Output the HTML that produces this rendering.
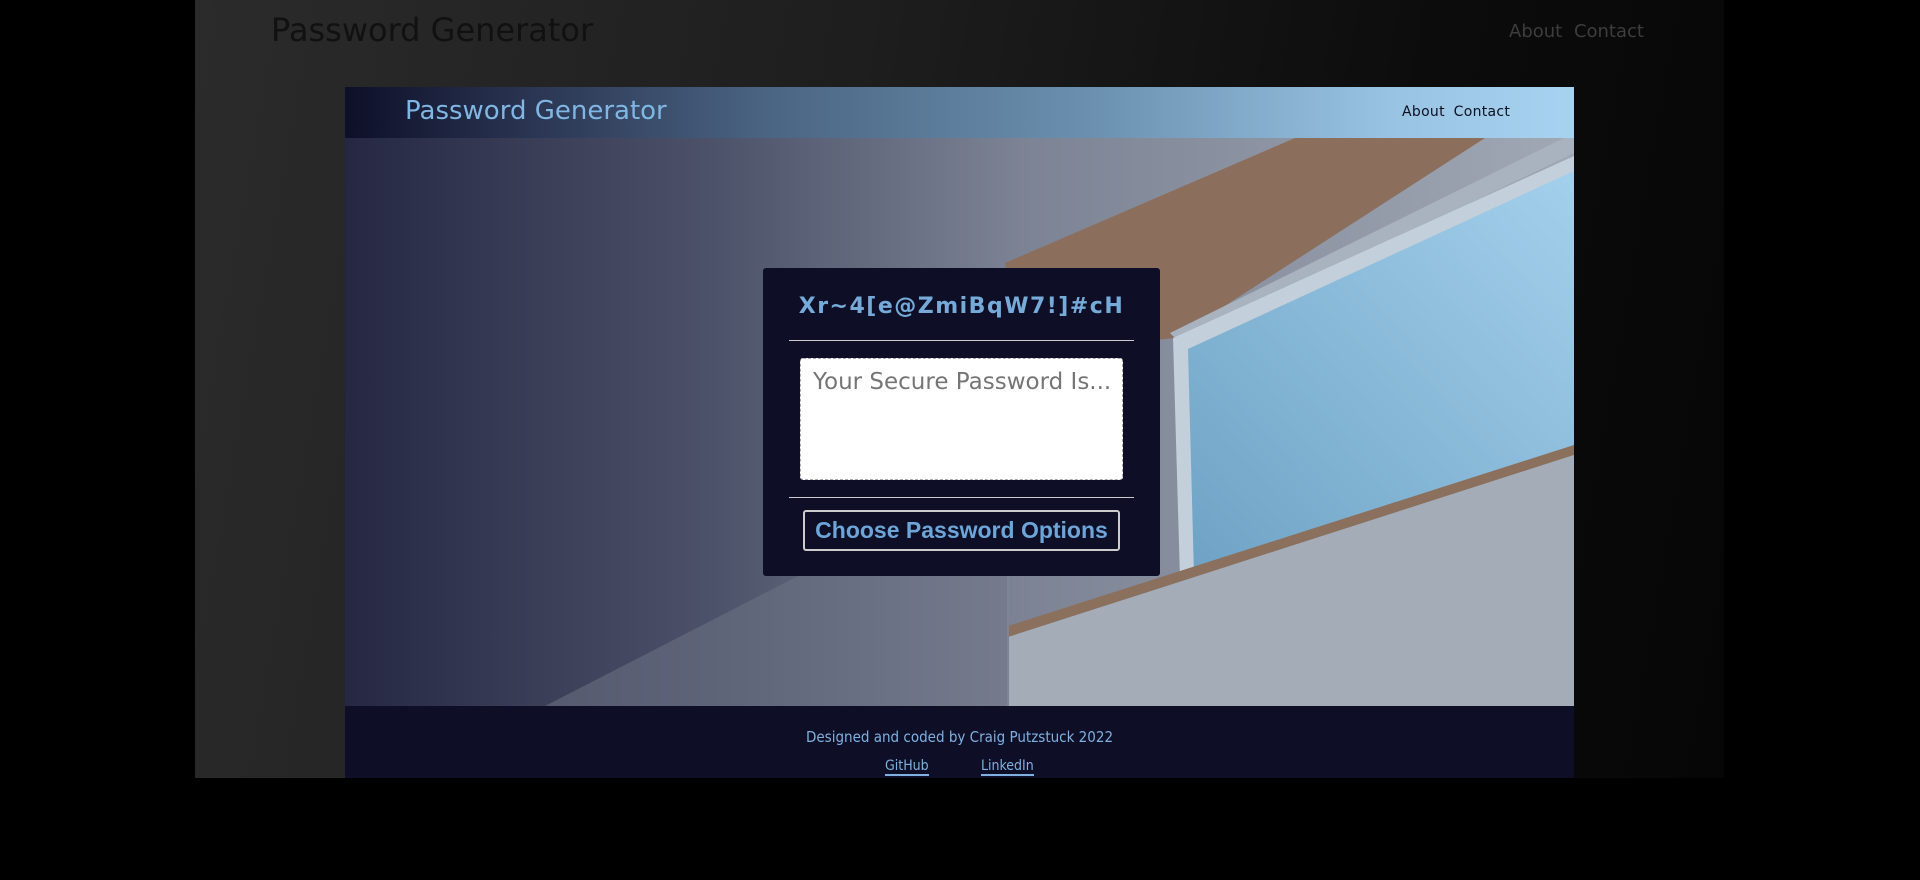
<!DOCTYPE html>
<html><head><meta charset="utf-8">
<style>
*{margin:0;padding:0;box-sizing:border-box}
body{width:1920px;height:880px;background:#000;position:relative;overflow:hidden;font-family:"DejaVu Sans","Liberation Sans",sans-serif}
.outer{position:absolute;left:195px;top:0;width:1529px;height:778px;background:linear-gradient(100deg,#2b2b2b 0%,#1e1e1e 40%,#0c0c0c 75%,#060606 100%)}
.otitle{position:absolute;left:271px;top:11px;font-size:32px;color:#111;font-family:"DejaVu Sans",sans-serif}
.onav{position:absolute;left:1509px;top:21px;font-size:18px;color:#3d3d3d;word-spacing:6px}
.inner{position:absolute;left:345px;top:87px;width:1229px;height:691px;overflow:hidden}
.ihead{position:absolute;left:0;top:0;width:1229px;height:51px;background:linear-gradient(90deg,#0e0f28 0%,#2a3552 15%,#4b6684 35%,#6a8fae 60%,#98c3e2 85%,#a7d3f1 100%)}
.ititle{position:absolute;left:60px;top:9px;font-size:26px;color:#80b6e4;font-family:"DejaVu Sans",sans-serif}
.inav{position:absolute;left:1057px;top:17px;font-size:14px;color:#0d0f22;word-spacing:4px;letter-spacing:0.3px}
.hero{position:absolute;left:0;top:51px;width:1229px;height:568px}
.foot{position:absolute;left:0;top:619px;width:1229px;height:72px;background:#0e0f27;color:#7fb0e0;text-align:center}
.foot p{position:absolute;left:0;width:100%;top:22px;font-size:15px;font-family:"DejaVu Sans Condensed","DejaVu Sans",sans-serif}
.foot a{position:absolute;top:52px;font-size:14px;color:#7fb0e0;text-decoration:none;border-bottom:2px solid #7fb0e0;font-family:"DejaVu Sans Condensed","DejaVu Sans",sans-serif}
.card{position:absolute;left:763px;top:268px;width:397px;height:308px;background:#0e0f27;border-radius:3px}
.pw{position:absolute;left:0;width:100%;top:26px;text-align:center;font-size:22px;letter-spacing:1.5px;color:#76abd9;font-weight:bold;font-family:"DejaVu Sans",sans-serif;white-space:nowrap}
.hr{position:absolute;left:26px;width:345px;height:1px;background:#ccc}
.ta{position:absolute;left:37px;top:90px;width:323px;height:122px;background:#fff;border:1px dashed #aaa;border-radius:3px}
.ta span{position:absolute;left:12px;top:10px;font-size:23px;color:#757575;font-family:"DejaVu Sans",sans-serif;white-space:nowrap}
.btn{position:absolute;left:40px;top:242px;width:317px;height:41px;border:2px solid #ccc;border-radius:3px;color:#6ea5d8;font-size:23px;text-align:center;line-height:36px;font-weight:bold;font-family:"Liberation Sans",sans-serif;white-space:nowrap}
</style></head><body>
<div class="outer"></div>
<div class="otitle">Password Generator</div>
<div class="onav">About Contact</div>
<div class="inner">
 <div class="hero">
  <svg width="1229" height="568" viewBox="0 0 1229 568">
   <defs>
    <linearGradient id="wall" x1="0" x2="1" y1="0" y2="0">
     <stop offset="0" stop-color="#262843"/>
     <stop offset="0.3" stop-color="#4c5269"/>
     <stop offset="0.55" stop-color="#7c8394"/>
     <stop offset="1" stop-color="#a0a8b5"/>
    </linearGradient>
    <linearGradient id="glass" x1="0" x2="1" y1="1" y2="0">
     <stop offset="0" stop-color="#6ea2c4"/>
     <stop offset="1" stop-color="#a3d0ec"/>
    </linearGradient>
   </defs>
   <rect width="1229" height="568" fill="url(#wall)"/>
   <polygon points="200,568 663,330 663,568" fill="#6f7688" opacity="0.5"/>
   <polygon points="660,125 950,0 1140,0 830,200 680,215" fill="#8c6e5c"/>
   <polygon points="825,195 1229,-5 1229,15 835,205" fill="#a9b3bf"/>
   <polygon points="828,200 1229,18 1229,300 835,440" fill="#c3cfda"/>
   <polygon points="843,211 1229,33 1229,310 849,437" fill="url(#glass)"/>
   <polygon points="663,499 663,488 1229,307 1229,317" fill="#8a705d"/>
   <polygon points="663,499 1229,317 1229,568 663,568" fill="#a4acb8"/>
   <rect x="662" y="420" width="2" height="148" fill="#7d8593"/>
  </svg>
 </div>
 <div class="ihead"><div class="ititle">Password Generator</div><div class="inav">About Contact</div></div>
 <div class="foot">
  <p>Designed and coded by Craig Putzstuck 2022</p>
  <a style="left:540px">GitHub</a>
  <a style="left:636px">LinkedIn</a>
 </div>
</div>
<div class="card">
 <div class="pw">Xr~4[e@ZmiBqW7!]#cH</div>
 <div class="hr" style="top:72px"></div>
 <div class="ta"><span>Your Secure Password Is...</span></div>
 <div class="hr" style="top:229px"></div>
 <div class="btn">Choose Password Options</div>
</div>
</body></html>
